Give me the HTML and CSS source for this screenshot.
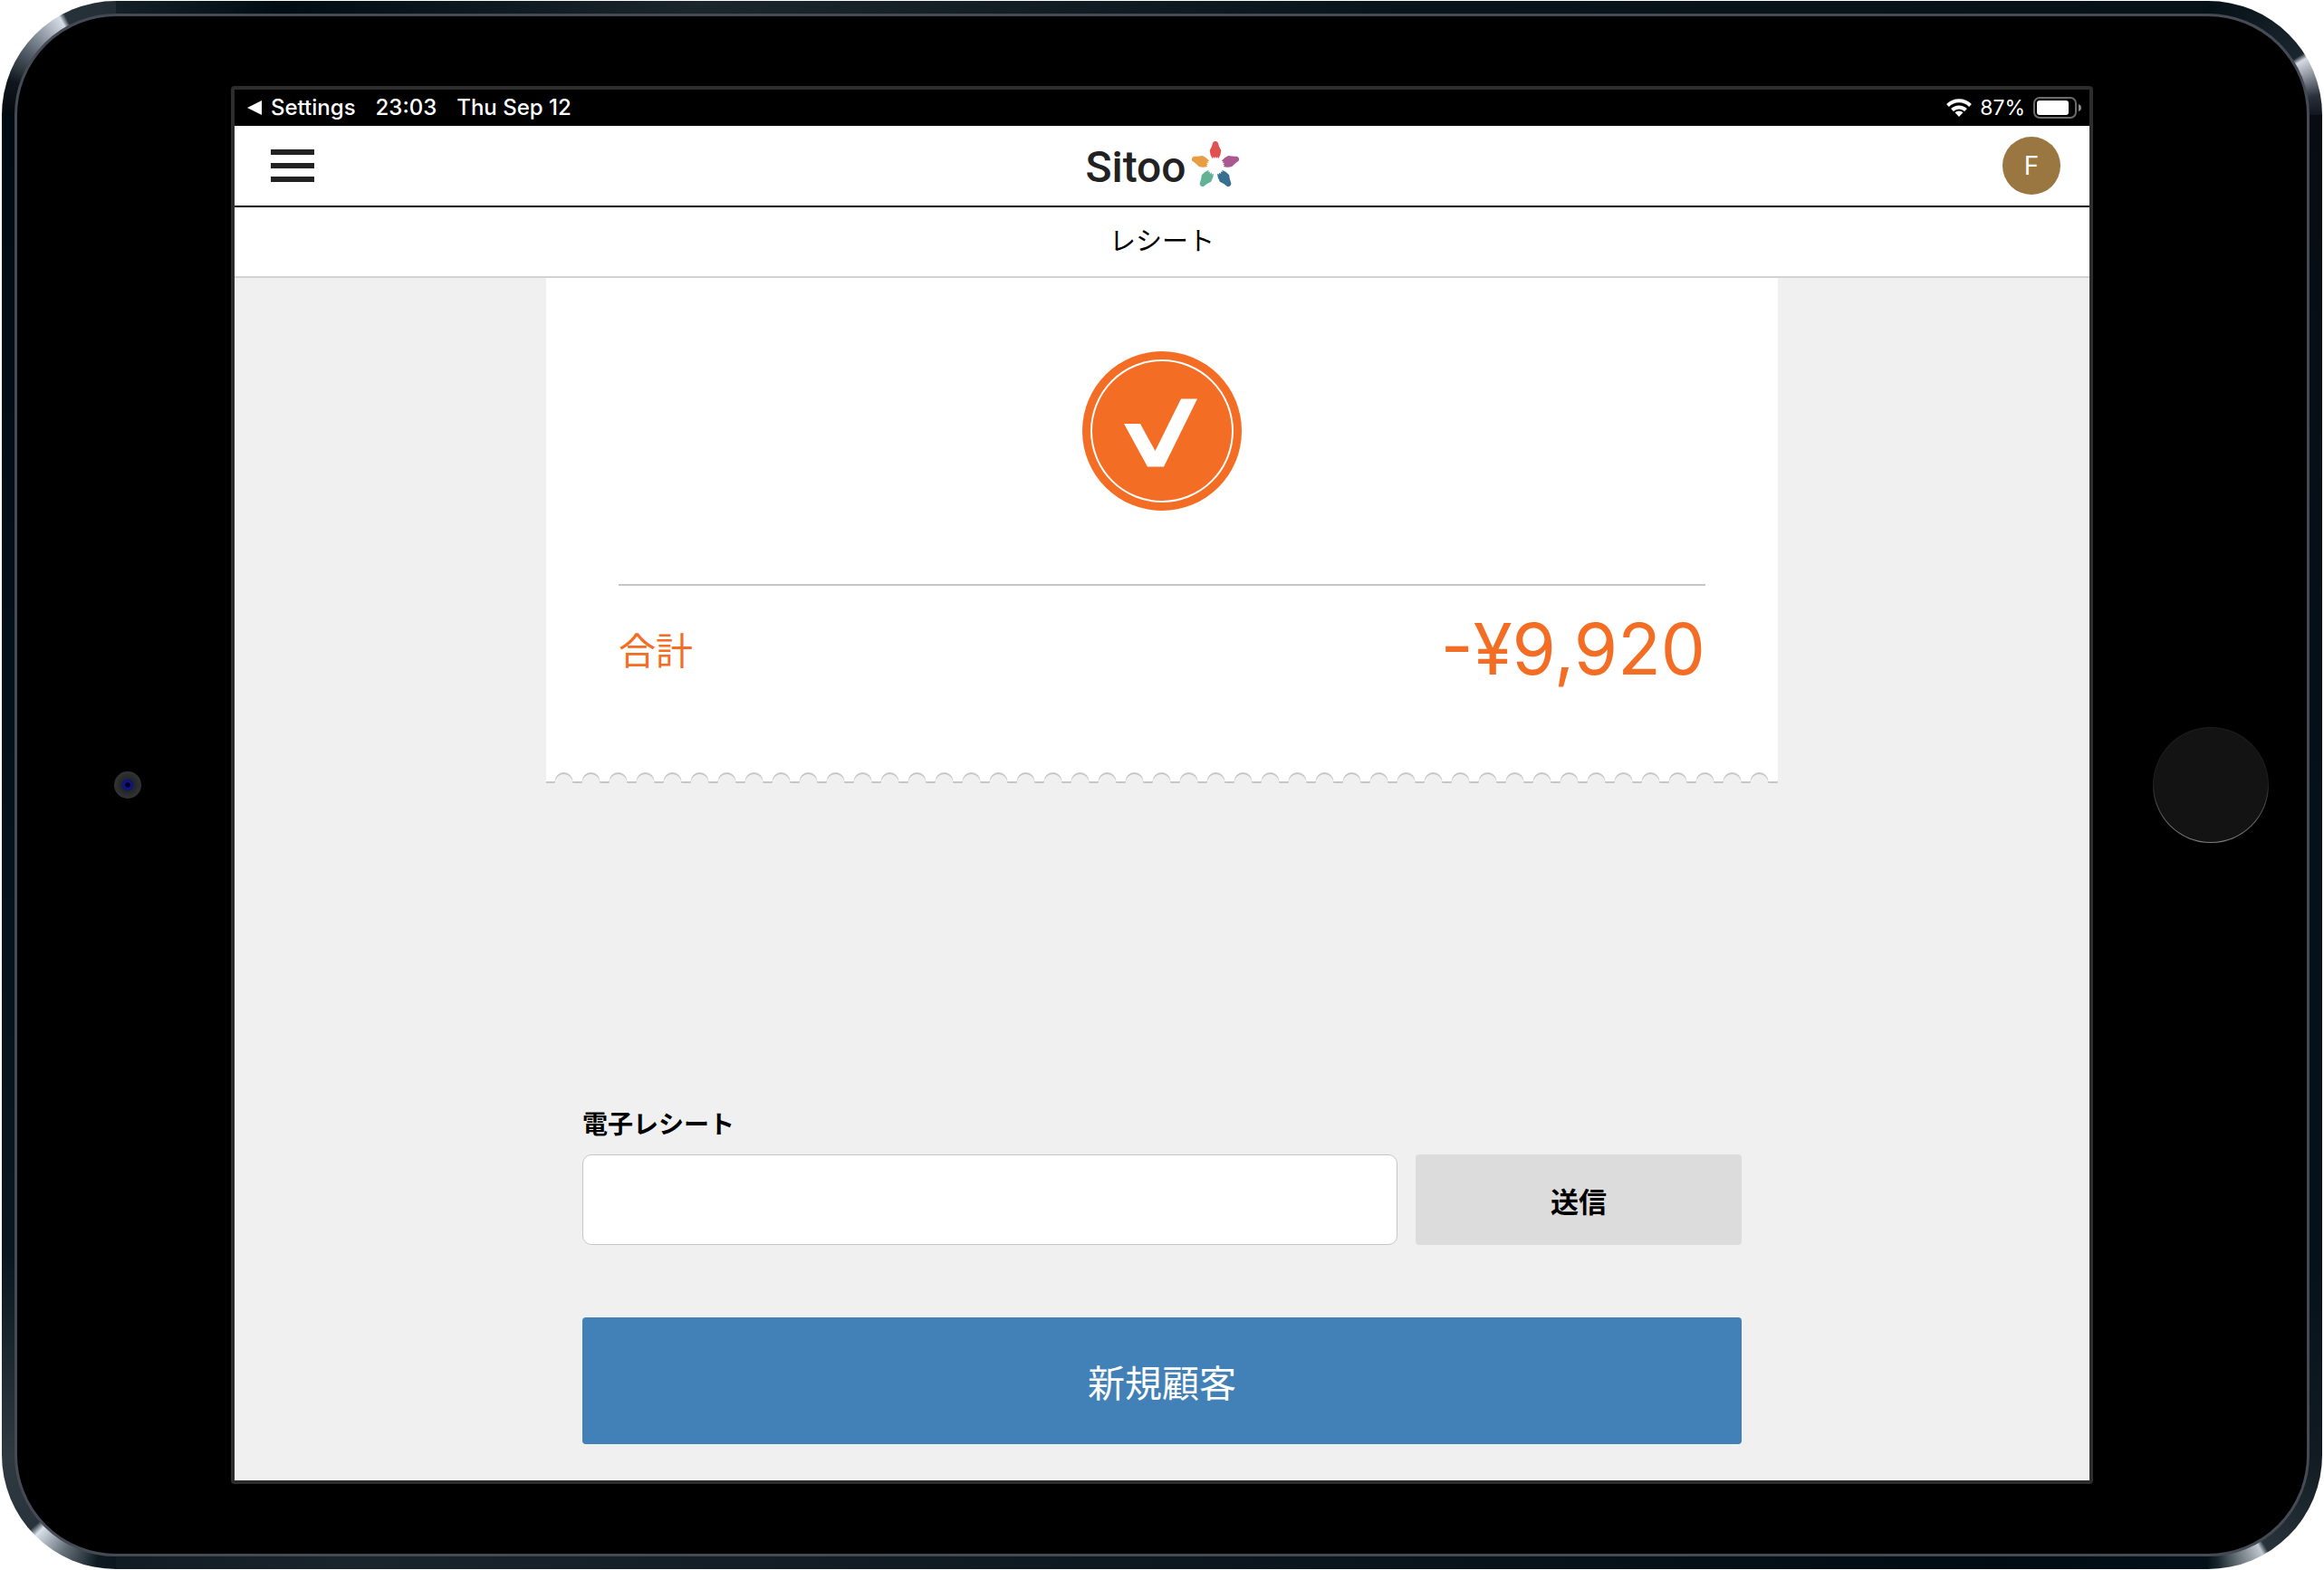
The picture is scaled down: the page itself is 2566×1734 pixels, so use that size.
FILE: index.html
```html
<!DOCTYPE html>
<html lang="ja">
<head>
<meta charset="utf-8">
<meta name="viewport" content="width=device-width, initial-scale=1">
<title>レシート</title>
<link rel="stylesheet" href="styles.css">
</head>
<body>
<div class="device">
  <div class="bezel">
    <div class="side side-left">
      <div class="camera"></div>
    </div>
    <div class="screen">
      <div class="status-bar">
        <div class="status-group">
          <a class="back-link" href="#">
            <svg class="back-icon" viewBox="0 0 16 18" aria-hidden="true"><path d="M0 9 16 1v16z" fill="#fff"/></svg>
            Settings
          </a>
          <span class="clock">23:03</span>
          <span>Thu Sep 12</span>
        </div>
        <div class="status-group status-right">
          <svg class="wifi-icon" viewBox="0 0 28 20" aria-hidden="true">
            <g fill="none" stroke="#fff" stroke-width="4">
              <path d="M1.500 7.500a17.700 17.700 0 0 1 25 0"/>
              <path d="M6.500 12.500a10.600 10.600 0 0 1 15 0"/>
            </g>
            <path d="M9.500 15.300a6.500 6.500 0 0 1 9 0L14 20z" fill="#fff"/>
          </svg>
          <span>87%</span>
          <svg class="battery-icon" viewBox="0 0 54 24" aria-hidden="true">
            <rect x="1" y="1" width="46" height="22" rx="6" fill="none" stroke="#6b6b6b" stroke-width="2"/>
            <rect x="4" y="4" width="35" height="16" rx="3" fill="#fff"/>
            <path d="M50 8q3 1 3 4t-3 4z" fill="#8a8a8a"/>
          </svg>
        </div>
      </div>

      <header class="app-header">
        <button class="menu-button" type="button" aria-label="メニュー">
          <span class="menu-line"></span>
          <span class="menu-line"></span>
          <span class="menu-line"></span>
        </button>
        <div class="logo">
          <span class="logo-name">Sitoo</span>
          <svg class="logo-star" viewBox="0 0 156 150" aria-hidden="true">
            <defs>
              <path id="petal" d="M70 4Q78 -4 86 4Q89 17 97 31Q96 46 88 58L85 52L81 57L78 50L75 57L71 52L68 58Q60 46 59 31Q67 17 70 4Z"/>
            </defs>
            <use href="#petal" fill="#e05252"/>
            <use href="#petal" fill="#a9598f" transform="rotate(72 78 82)"/>
            <use href="#petal" fill="#38708f" transform="rotate(144 78 82)"/>
            <use href="#petal" fill="#63b296" transform="rotate(216 78 82)"/>
            <use href="#petal" fill="#e79d42" transform="rotate(288 78 82)"/>
          </svg>
        </div>
        <button class="avatar" type="button">F</button>
      </header>

      <h1 class="page-title">レシート</h1>

      <main class="content">
        <section class="receipt">
          <div class="receipt-body">
            <svg class="success-icon" viewBox="0 0 176 176" role="img" aria-label="完了">
              <circle cx="88" cy="88" r="88" fill="#f36d24"/>
              <circle cx="88" cy="88" r="78" fill="none" stroke="#fff" stroke-width="2"/>
              <path d="M46 80h18l16.500 30L109 52.500h18L90 127.500H72z" fill="#fff"/>
            </svg>
            <div class="total">
              <span class="total-label">合計</span>
              <span class="total-amount">-¥9,920</span>
            </div>
          </div>
          <svg class="receipt-edge" aria-hidden="true">
            <defs>
              <pattern id="scallop" width="30" height="12" patternUnits="userSpaceOnUse">
                <rect width="30" height="10" fill="#fff"/>
                <rect y="10" width="30" height="2" fill="#c6c6c6"/>
                <circle cx="19.500" cy="10" r="10" fill="#c6c6c6"/>
                <circle cx="19.500" cy="12" r="10" fill="#f0f0f0"/>
                <rect x="10" y="9" width="19" height="3" fill="#f0f0f0"/>
              </pattern>
            </defs>
            <rect width="100%" height="12" fill="url(#scallop)"/>
          </svg>
        </section>

        <form class="actions">
          <label class="field-label" for="e-receipt">電子レシート</label>
          <div class="field-row">
            <input class="field" id="e-receipt" type="email">
            <button class="button button-send" type="button">送信</button>
          </div>
          <button class="button button-new" type="button">新規顧客</button>
        </form>
      </main>
    </div>
    <div class="side side-right">
      <button class="home-button" type="button" aria-label="ホーム"></button>
    </div>
  </div>
</div>
</body>
</html>
```
FILE: styles.css
```css
*,
*::before,
*::after {
  box-sizing: border-box;
}

body {
  margin: 0;
  min-height: 100vh;
  padding: 1px 2px;
  display: flex;
  background: #fff;
  color: #000;
  font-family: Inter, "Noto Sans CJK JP", sans-serif;
}

button,
input {
  margin: 0;
  padding: 0;
  border: 0;
  font: inherit;
  color: inherit;
}

/* Tablet frame: one lit arc per corner, plain metal along the sides */
.device {
  flex: 1;
  display: flex;
  padding: 14px;
  border-radius: 126px;
  background:
    conic-gradient(from 270deg at 100% 100%, #04090d 0deg, #10161d 18deg, #56616c 36deg, #d5dce5 60deg, #26313a 63deg, #222d35 90deg) 0 0 / 126px 126px no-repeat,
    conic-gradient(at 0 100%, #050f16 0deg, #1a252d 57deg, #d5d9e2 60deg, #9ba0aa 67deg, #2a303b 80deg, #10151e 90deg) 100% 0 / 126px 126px no-repeat,
    conic-gradient(from 90deg at 0 0, #111a21 0deg, #28333b 58deg, #c0c8d0 61deg, #6f7980 73deg, #18242c 85deg, #06131b 90deg) 100% 100% / 126px 126px no-repeat,
    conic-gradient(from 180deg at 100% 0, #0b171f 0deg, #0e1a21 10deg, #626d75 28deg, #d8e0e8 45deg, #28333b 49deg, #2e3940 90deg) 0 100% / 126px 126px no-repeat,
    linear-gradient(90deg, #222d35, #000c14 12%, #1a252c 30%, #08141b 60%, #050f16) 0 0 / 100% 50% no-repeat,
    linear-gradient(90deg, #0b171f, #1a242c 15%, #0c171f 50%, #000b14 86%, #06131b) 0 100% / 100% 50% no-repeat;
  position: relative;
}

.device::before {
  content: "";
  position: absolute;
  inset: 126px 0;
  background:
    linear-gradient(#000a13, #04101a 50%, #0a161f 85%, #2e3940) 0 0 / 14px 100% no-repeat,
    linear-gradient(#080c12, #04101a 50%, #04111a 85%, #111a21) 100% 0 / 14px 100% no-repeat;
}

.bezel {
  position: relative;
  flex: 1;
  display: grid;
  grid-template-columns: 236px minmax(0, 1fr) 236px;
  padding: 77px 0;
  border: 3px solid #454a55;
  border-radius: 112px;
  background: #000;
}

.side {
  display: flex;
  align-items: center;
  justify-content: center;
}

.side-left {
  padding-left: 8px;
}

.side-right {
  padding-left: 24px;
}

.camera {
  width: 30px;
  height: 30px;
  border-radius: 50%;
  background: radial-gradient(circle, #000018 0 2px, #1414b0 4px, #10106a 5px, #20262c 7px, #2b2c2e 11px, #343436 15px);
}

.home-button {
  width: 128px;
  height: 128px;
  border-radius: 50%;
  border: 1px solid transparent;
  background:
    linear-gradient(#131313, #131313) padding-box,
    linear-gradient(#1d1d1d 0 50%, #2c3436 54%, #7d8282) border-box;
}

.screen {
  display: flex;
  flex-direction: column;
  border: 4px solid #2d2d2d;
  border-radius: 4px;
  background: #f0f0f0;
}

.status-bar {
  display: flex;
  justify-content: space-between;
  height: 40px;
  padding: 0 8px 0 14px;
  background: #000;
  color: #fff;
  font-size: 24px;
  font-weight: 500;
  line-height: 40px;
}

.status-group {
  display: flex;
  align-items: center;
  gap: 22px;
}

.status-right {
  gap: 9px;
  font-size: 23px;
  font-weight: 400;
}

.back-link {
  display: flex;
  align-items: center;
  gap: 10px;
  color: inherit;
  text-decoration: none;
}

.back-icon {
  width: 16px;
  height: 18px;
}

.wifi-icon {
  width: 28px;
  height: 20px;
}

.battery-icon {
  width: 54px;
  height: 24px;
}

.app-header {
  display: grid;
  grid-template-columns: 1fr auto 1fr;
  align-items: center;
  height: 90px;
  padding: 0 32px;
  border-bottom: 2px solid #000;
  background: #fff;
}

.menu-button {
  display: flex;
  flex-direction: column;
  gap: 9px;
  width: 64px;
  padding: 8px;
  background: none;
}

.menu-line {
  height: 6px;
  background: #222;
}

.logo {
  display: flex;
  align-items: flex-start;
  gap: 6px;
}

.logo-name {
  padding-top: 4px;
  color: #222;
  font-family: Roboto, sans-serif;
  font-size: 48px;
  font-weight: 500;
  line-height: 56px;
}

.logo-star {
  width: 52px;
  height: 50px;
  margin-top: 3px;
}

.avatar {
  justify-self: end;
  width: 64px;
  height: 64px;
  border-radius: 50%;
  background: #9a7741;
  color: #fff;
  font-size: 28px;
  text-align: center;
}

.page-title {
  margin: 0;
  height: 78px;
  border-bottom: 2px solid #d3d3d3;
  background: #fff;
  font-size: 29px;
  font-weight: 400;
  line-height: 76px;
  text-align: center;
}

.content {
  flex: 1;
  display: flex;
  flex-direction: column;
  align-items: center;
  justify-content: space-between;
  padding-bottom: 40px;
}

.receipt {
  width: 100%;
  max-width: 1360px;
}

.receipt-body {
  display: flex;
  flex-direction: column;
  align-items: center;
  padding: 81px 80px 68px;
  background: #fff;
}

.success-icon {
  width: 176px;
  height: 176px;
  margin-bottom: 81px;
}

.total {
  align-self: stretch;
  display: flex;
  align-items: center;
  justify-content: space-between;
  height: 140px;
  border-top: 2px solid #c6c6c6;
  color: #f36d24;
}

.total-label {
  font-size: 41px;
}

.total-amount {
  font-size: 78px;
}

.receipt-edge {
  display: block;
  width: 100%;
  height: 12px;
}

.actions {
  width: 100%;
  max-width: 1280px;
}

.field-label {
  display: block;
  margin-bottom: 12px;
  font-size: 28px;
  font-weight: 700;
  line-height: 42px;
}

.field-row {
  display: flex;
  gap: 20px;
  margin-bottom: 80px;
}

.field {
  flex: 1;
  height: 100px;
  padding: 0 20px;
  border: 1px solid #c6c6c6;
  border-radius: 10px;
  background: #fff;
  font-size: 31px;
}

.button {
  border-radius: 4px;
}

.button-send {
  width: 360px;
  height: 100px;
  background: #dcdcdc;
  font-size: 31px;
  font-weight: 700;
}

.button-new {
  display: block;
  width: 100%;
  height: 140px;
  background: #4281b7;
  color: #fff;
  font-size: 41px;
}
```
